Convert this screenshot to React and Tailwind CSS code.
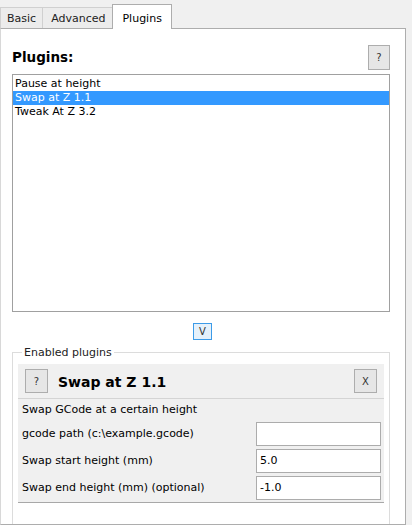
import React from 'react'

const plugins = ['Pause at height', 'Swap at Z 1.1', 'Tweak At Z 3.2']

function Tab({ label, active, className = '' }) {
  if (active) {
    return (
      <div className="relative z-10 -mb-px h-[25px] px-[9px] bg-white border border-b-0 border-[#adadad] flex items-start pt-[6px]">
        {label}
      </div>
    )
  }
  return (
    <div className={`h-[21px] bg-[#ececec] border border-[#d0d0d0] border-b-0 -mr-px flex items-start pt-[3px] text-[#222] ${className}`}>
      {label}
    </div>
  )
}

function SmallButton({ children, focused, className = '' }) {
  return (
    <div
      className={`flex items-center justify-center border text-[10px] text-[#333] ${
        focused ? 'border-[#3c9be8] bg-[#e5f1fb]' : 'border-[#adadad] bg-[#e6e6e6]'
      } ${className}`}
    >
      {children}
    </div>
  )
}

export default function App() {
  return (
    <div
      className="w-[412px] h-[525px] bg-[#f0f0f0] overflow-hidden flex flex-col text-[11px] text-black"
      style={{ fontFamily: '"DejaVu Sans", Tahoma, sans-serif' }}
    >
      {/* tab strip */}
      <div className="h-[28px] flex items-end">
        <Tab label="Basic" className="px-[6px]" />
        <Tab label="Advanced" className="pl-[8px] pr-[7px]" />
        <Tab label="Plugins" active />
      </div>

      {/* tab page */}
      <div className="w-[406px] flex-1 bg-white border border-[#adadad] border-l-[#d8d8d8] pl-[11px] pr-[15px] flex flex-col">
        <div className="h-[44px] flex items-end justify-between pb-[3px]">
          <span className="text-[13.5px] font-bold leading-none mb-[6px]">Plugins:</span>
          <SmallButton className="w-[22px] h-[25px]">?</SmallButton>
        </div>

        <div className="h-[238px] border border-[#a0a0a0] py-[2px] mt-[1px]">
          {plugins.map((p) => (
            <div
              key={p}
              className={`h-[14px] px-[2px] leading-[14px] ${
                p === 'Swap at Z 1.1' ? 'bg-[#3399ff] text-white' : ''
              }`}
            >
              {p}
            </div>
          ))}
        </div>

        <div className="flex justify-center pt-[11px]">
          <SmallButton focused className="w-[19px] h-[17px] ml-[3px]">V</SmallButton>
        </div>

        {/* enabled plugins group */}
        <div className="relative mt-[12px] flex-1 border border-[#dcdcdc] border-b-0 px-[5px] pt-[11px]">
          <span className="absolute -top-[8px] left-[9px] bg-white px-[2px] text-[#222]">Enabled plugins</span>

          <div className="bg-[#f0f0f0] border-b border-[#a8a8a8]">
            <div className="h-[35px] flex items-center justify-between pl-[7px] pr-[7px] border-b border-[#d4d4d4]">
              <div className="flex items-center gap-[10px]">
                <SmallButton className="w-[23px] h-[24px]">?</SmallButton>
                <span className="text-[14px] font-bold mt-[3px]">Swap at Z 1.1</span>
              </div>
              <SmallButton className="w-[23px] h-[24px]">X</SmallButton>
            </div>
            <div className="px-[4px] pr-[3px] pb-[2px]">
              <div className="h-[23px] flex items-center">Swap GCode at a certain height</div>
              <div className="flex flex-col gap-[3px]">
                {[
                  ['gcode path (c:\\example.gcode)', ''],
                  ['Swap start height (mm)', '5.0'],
                  ['Swap end height (mm) (optional)', '-1.0'],
                ].map(([label, value]) => (
                  <div key={label} className="h-[24px] flex items-center justify-between">
                    <span>{label}</span>
                    <div className="w-[125px] h-[24px] bg-white border border-[#acacac] flex items-center px-[3px]">
                      {value}
                    </div>
                  </div>
                ))}
              </div>
            </div>
          </div>
        </div>
      </div>
    </div>
  )
}
